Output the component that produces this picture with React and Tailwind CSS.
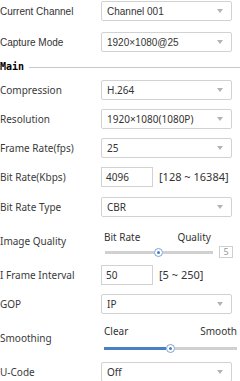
import React from "react";

const lab = "text-[10px] text-[#3a3a3a]";
const labFont = { fontFamily: '"Noto Sans", sans-serif' };

function Caret() {
  return (
    <svg width="6" height="4" viewBox="0 0 6 4" className="absolute right-[8px] top-1/2 -translate-y-1/2">
      <path d="M0 0 L6 0 L3 4 Z" fill="#b3b3b3" />
    </svg>
  );
}

function Select({ value, arial }) {
  return (
    <div
      className="relative w-[131px] h-[20px] border border-[#d2d2d2] rounded-[2px] bg-white flex items-center pl-[5px] text-[#333] text-[10px]"
      style={arial ? { fontFamily: '"Liberation Sans", Arial, sans-serif' } : labFont}
    >
      {value}
      <Caret />
    </div>
  );
}

function Row({ label, children, className = "", arial }) {
  return (
    <div className={`flex items-center h-[20px] ${className}`}>
      <div
        className={`w-[101px] shrink-0 ${arial ? "text-[10px] text-[#333]" : lab}`}
        style={arial ? { fontFamily: '"Liberation Sans", Arial, sans-serif' } : labFont}
      >
        {label}
      </div>
      {children}
    </div>
  );
}

function Input({ value }) {
  return (
    <div className="w-[52px] h-[20px] border border-[#d2d2d2] bg-white flex items-center pl-[4px] text-[10px] text-[#333]" style={labFont}>
      {value}
    </div>
  );
}

function Thumb() {
  return (
    <div className="w-[9px] h-[9px] rounded-full bg-white border border-[#7aa3d6] flex items-center justify-center shrink-0">
      <div className="w-[3px] h-[3px] rounded-full bg-[#4a7fc1]" />
    </div>
  );
}

export default function App() {
  return (
    <div className="w-[240px] h-[381px] bg-white overflow-hidden relative">
      <Row label="Current Channel" arial className="mt-[1px]">
        <Select value="Channel 001" arial />
      </Row>
      <Row label="Capture Mode" arial className="mt-[11px]">
        <Select value="1920×1080@25" arial />
      </Row>

      <div className="flex items-center h-[12px] mt-[9px]">
        <span className="text-[10px] font-bold text-black leading-none" style={{ fontFamily: '"DejaVu Sans Mono", monospace' }}>
          Main
        </span>
        <div className="flex-1 h-px bg-[#c8c8c8] ml-[5px]" />
      </div>

      <Row label="Compression" className="mt-[7px]">
        <Select value="H.264" />
      </Row>
      <Row label="Resolution" className="mt-[9px]">
        <Select value="1920×1080(1080P)" />
      </Row>
      <Row label="Frame Rate(fps)" className="mt-[9px]">
        <Select value="25" />
      </Row>
      <Row label="Bit Rate(Kbps)" className="mt-[9px]">
        <Input value="4096" />
        <span className="ml-[6px] text-[11px] text-[#333]" style={labFont}>[128 ~ 16384]</span>
      </Row>
      <Row label="Bit Rate Type" className="mt-[10px]">
        <Select value="CBR" />
      </Row>

      <div className="flex items-center h-[38px] mt-[5px]">
        <div className={`w-[101px] shrink-0 ${lab}`} style={labFont}>Image Quality</div>
        <div className="flex flex-col pt-[4px]">
          <div className="flex h-[18px] items-center text-[10px] text-[#333] pl-[3px]" style={labFont}>
            <span>Bit Rate</span>
            <span className="ml-[37px]">Quality</span>
          </div>
          <div className="flex items-center h-[12px] pl-[4px]">
            <div className="w-[49px] h-[3px] bg-[#d0d0d0]" />
            <Thumb />
            <div className="w-[50px] h-[3px] bg-[#d0d0d0]" />
            <div className="ml-[6px] w-[14px] h-[12px] border border-[#cfcfcf] flex items-center justify-center text-[9px] text-[#999]" style={labFont}>5</div>
          </div>
        </div>
      </div>

      <Row label="I Frame Interval" className="mt-[5px]">
        <Input value="50" />
        <span className="ml-[6px] text-[11px] text-[#333]" style={labFont}>[5 ~ 250]</span>
      </Row>
      <Row label="GOP" className="mt-[9px]">
        <Select value="IP" />
      </Row>

      <div className="flex items-center h-[36px] mt-[6px]">
        <div className={`w-[101px] shrink-0 ${lab}`} style={labFont}>Smoothing</div>
        <div className="flex flex-col w-[136px]">
          <div className="flex h-[20px] items-center justify-between text-[10px] text-[#333] pl-[3px]" style={labFont}>
            <span>Clear</span>
            <span>Smooth</span>
          </div>
          <div className="flex items-center h-[14px] pl-[3px]">
            <div className="w-[62px] h-[3px] bg-[#4a7fc1]" />
            <Thumb />
            <div className="flex-1 h-[3px] bg-[#d0d0d0]" />
          </div>
        </div>
      </div>

      <Row label="U-Code" className="mt-[6px]">
        <Select value="Off" />
      </Row>
    </div>
  );
}
